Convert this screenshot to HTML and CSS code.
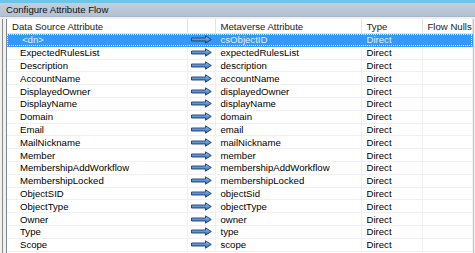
FILE: index.html
```html
<!DOCTYPE html>
<html>
<head>
<meta charset="utf-8">
<link rel="stylesheet" href="styles.css">
</head>
<body>
<svg class="defs" width="0" height="0" aria-hidden="true">
  <defs>
    <linearGradient id="g" x1="0" y1="0" x2="0" y2="1">
      <stop offset="0" stop-color="#9cc4ee"/>
      <stop offset="0.5" stop-color="#5d97d8"/>
      <stop offset="1" stop-color="#2f62a8"/>
    </linearGradient>
    <symbol id="arrow" viewBox="0 0 21 9">
      <path d="M0.5 3 H14.5 V0.8 L20.3 4.5 L14.5 8.2 V6 H0.5 Z" fill="url(#g)" stroke="#1d3a6e" stroke-width="0.9"/>
    </symbol>
  </defs>
</svg>
<div class="topstrip"></div>
<div class="titlebar">Configure Attribute Flow</div>
<div class="frame">
  <div class="list">
    <table class="grid">
      <colgroup>
        <col class="c-src"><col class="c-arrow"><col class="c-mv"><col class="c-type"><col class="c-nulls">
      </colgroup>
      <thead>
        <tr><th>Data Source Attribute</th><th></th><th>Metaverse Attribute</th><th>Type</th><th>Flow Nulls</th></tr>
      </thead>
      <tbody>
        <tr class="sel"><td class="src dn">&lt;dn&gt;</td><td class="arrow"><svg class="arr"><use href="#arrow"/></svg></td><td>csObjectID</td><td>Direct</td><td></td></tr>
        <tr><td class="src">ExpectedRulesList</td><td class="arrow"><svg class="arr"><use href="#arrow"/></svg></td><td>expectedRulesList</td><td>Direct</td><td></td></tr>
        <tr><td class="src">Description</td><td class="arrow"><svg class="arr"><use href="#arrow"/></svg></td><td>description</td><td>Direct</td><td></td></tr>
        <tr><td class="src">AccountName</td><td class="arrow"><svg class="arr"><use href="#arrow"/></svg></td><td>accountName</td><td>Direct</td><td></td></tr>
        <tr><td class="src">DisplayedOwner</td><td class="arrow"><svg class="arr"><use href="#arrow"/></svg></td><td>displayedOwner</td><td>Direct</td><td></td></tr>
        <tr><td class="src">DisplayName</td><td class="arrow"><svg class="arr"><use href="#arrow"/></svg></td><td>displayName</td><td>Direct</td><td></td></tr>
        <tr><td class="src">Domain</td><td class="arrow"><svg class="arr"><use href="#arrow"/></svg></td><td>domain</td><td>Direct</td><td></td></tr>
        <tr><td class="src">Email</td><td class="arrow"><svg class="arr"><use href="#arrow"/></svg></td><td>email</td><td>Direct</td><td></td></tr>
        <tr><td class="src">MailNickname</td><td class="arrow"><svg class="arr"><use href="#arrow"/></svg></td><td>mailNickname</td><td>Direct</td><td></td></tr>
        <tr><td class="src">Member</td><td class="arrow"><svg class="arr"><use href="#arrow"/></svg></td><td>member</td><td>Direct</td><td></td></tr>
        <tr><td class="src">MembershipAddWorkflow</td><td class="arrow"><svg class="arr"><use href="#arrow"/></svg></td><td>membershipAddWorkflow</td><td>Direct</td><td></td></tr>
        <tr><td class="src">MembershipLocked</td><td class="arrow"><svg class="arr"><use href="#arrow"/></svg></td><td>membershipLocked</td><td>Direct</td><td></td></tr>
        <tr><td class="src">ObjectSID</td><td class="arrow"><svg class="arr"><use href="#arrow"/></svg></td><td>objectSid</td><td>Direct</td><td></td></tr>
        <tr><td class="src">ObjectType</td><td class="arrow"><svg class="arr"><use href="#arrow"/></svg></td><td>objectType</td><td>Direct</td><td></td></tr>
        <tr><td class="src">Owner</td><td class="arrow"><svg class="arr"><use href="#arrow"/></svg></td><td>owner</td><td>Direct</td><td></td></tr>
        <tr><td class="src">Type</td><td class="arrow"><svg class="arr"><use href="#arrow"/></svg></td><td>type</td><td>Direct</td><td></td></tr>
        <tr><td class="src">Scope</td><td class="arrow"><svg class="arr"><use href="#arrow"/></svg></td><td>scope</td><td>Direct</td><td></td></tr>
      </tbody>
    </table>
  </div>
</div>
</body>
</html>
```

FILE: styles.css
```css
html, body {
  margin: 0;
  padding: 0;
}
body {
  width: 475px;
  height: 253px;
  overflow: hidden;
  background: #f0f0f0;
  font-family: "Liberation Sans", Arial, sans-serif;
  font-size: 9.6px;
  color: #000;
}
.defs {
  position: absolute;
  width: 0;
  height: 0;
  overflow: hidden;
}
.topstrip {
  height: 3px;
  background: #6cc6ea;
}
.titlebar {
  height: 13px;
  line-height: 13px;
  padding-left: 6px;
  background: linear-gradient(#c3cedb, #b3c1d1);
  color: #101010;
  border-bottom: 1px solid #a9b6c6;
}
.frame {
  margin-left: 2px;
  margin-top: 2px;
  border-left: 1px solid #8a8a8a;
  padding-left: 3px;
  height: 240px;
}
.list {
  border-left: 1px solid #82878f;
  background: #fff;
  height: 240px;
  width: 466px;
  border-right: 1px solid #c8c8c8;
}
.grid {
  border-collapse: collapse;
  table-layout: fixed;
  width: 465px;
}
.c-src { width: 180px; }
.c-arrow { width: 28px; }
.c-mv { width: 146px; }
.c-type { width: 61px; }
.c-nulls { width: 50px; }
.grid th {
  height: 14px;
  padding: 0 0 0 5px;
  font-weight: normal;
  text-align: left;
  color: #1a1a1a;
  border-right: 1px solid #e3e3e3;
  border-bottom: 1px solid #e3e3e3;
  white-space: nowrap;
  overflow: hidden;
}
.grid td {
  height: 12.8px;
  padding: 0 0 0 5px;
  line-height: 11px;
  border-right: 1px solid #f0f0f0;
  border-bottom: 1px solid #f0f0f0;
  white-space: nowrap;
  overflow: hidden;
  box-sizing: border-box;
}
.grid td.src { padding-left: 13px; }
.grid td.dn { padding-left: 15px; }
.grid td.arrow {
  padding: 0 0 0 3px;
  line-height: 0;
}
.arr {
  display: block;
  width: 21px;
  height: 9px;
}
.grid tr.sel td {
  background: #3399ff;
  color: #dfeeff;
  border-color: #3399ff;
}
.grid tr.sel {
  outline: 1px dotted #e8f2ff;
  outline-offset: -1px;
}
```
